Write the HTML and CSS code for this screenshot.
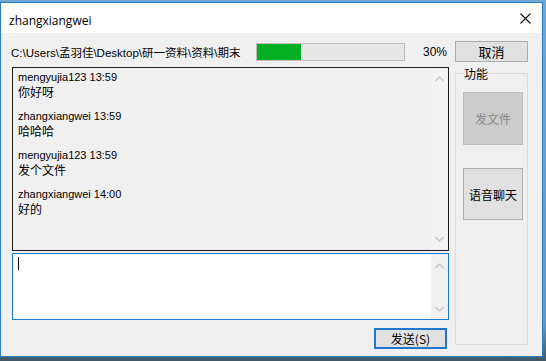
FILE: index.html
```html
<!DOCTYPE html>
<html lang="zh">
<head>
    <meta charset="UTF-8">
    <title>zhangxiangwei</title>
    <link rel="stylesheet" href="styles.css">
</head>
<body>
    <div class="window">
        <div class="titlebar">
            <span class="title">zhangxiangwei</span>
            <svg class="close" width="11" height="11" viewBox="0 0 11 11">
                <path d="M0.5 0.5 L10.5 10.5 M10.5 0.5 L0.5 10.5" stroke="#111" stroke-width="1.1" fill="none"/>
            </svg>
        </div>

        <div class="content">
            <div class="toprow">
                <span class="path">C:\Users\孟羽佳\Desktop\研一资料\资料\期末</span>
                <div class="progress"><div class="fill" style="width: 30%"></div></div>
                <span class="percent">30%</span>
                <button class="btn btn-cancel">取消</button>
            </div>

            <div class="main">
                <div class="chat">
                    <div class="history">
                        <div class="messages">
                            <div class="msg">
                                <div class="who">mengyujia123 13:59</div>
                                <div class="text">你好呀</div>
                            </div>
                            <div class="msg">
                                <div class="who">zhangxiangwei 13:59</div>
                                <div class="text">哈哈哈</div>
                            </div>
                            <div class="msg">
                                <div class="who">mengyujia123 13:59</div>
                                <div class="text">发个文件</div>
                            </div>
                            <div class="msg">
                                <div class="who">zhangxiangwei 14:00</div>
                                <div class="text">好的</div>
                            </div>
                        </div>
                        <div class="scroll">
                            <svg width="9" height="6" viewBox="0 0 9 6"><polyline points="0.5,5 4.5,1 8.5,5" class="arrow"/></svg>
                            <svg width="9" height="6" viewBox="0 0 9 6"><polyline points="0.5,1 4.5,5 8.5,1" class="arrow"/></svg>
                        </div>
                    </div>

                    <div class="input">
                        <div class="editor"><span class="caret"></span></div>
                        <div class="scroll scroll-input">
                            <svg width="9" height="6" viewBox="0 0 9 6"><polyline points="0.5,5 4.5,1 8.5,5" class="arrow"/></svg>
                            <svg width="9" height="6" viewBox="0 0 9 6"><polyline points="0.5,1 4.5,5 8.5,1" class="arrow"/></svg>
                        </div>
                    </div>

                    <div class="send-row">
                        <button class="btn btn-send">发送(S)</button>
                    </div>
                </div>

                <fieldset class="group">
                    <legend>功能</legend>
                    <button class="btn btn-side" disabled>发文件</button>
                    <button class="btn btn-side btn-voice">语音聊天</button>
                </fieldset>
            </div>
        </div>
    </div>
</body>
</html>
```

FILE: styles.css
```css
body {
    margin: 0;
    width: 546px;
    height: 361px;
    overflow: hidden;
    background: linear-gradient(180deg, #6ea8d6 0%, #5f98c6 90%, #3e5866 100%);
    font-family: "Noto Sans CJK SC", sans-serif;
    color: #000;
}
.window {
    width: 541px;
    height: 353px;
    margin-top: 2px;
    border: 1px solid #2b7cc4;
    background: #f0f0f0;
    display: flex;
    flex-direction: column;
}
.titlebar {
    height: 30px;
    background: #fff;
    display: flex;
    align-items: center;
    justify-content: space-between;
    padding: 0 11px 0 8px;
}
.title {
    font-family: "Open Sans", "Liberation Sans", sans-serif;
    font-size: 12px;
    padding-top: 4px;
}
.close {
    display: block;
}
.content {
    flex: 1;
    padding: 8px 14px 0 10px;
}
.toprow {
    display: flex;
    align-items: center;
    height: 21px;
}
.path {
    width: 245px;
    font-family: "Liberation Sans", "Noto Sans CJK SC", sans-serif;
    font-size: 11.5px;
    white-space: nowrap;
}
.progress {
    width: 147px;
    height: 16px;
    border: 1px solid #bcbcbc;
    background: #e6e6e6;
}
.fill {
    height: 100%;
    background: #06b025;
}
.percent {
    width: 42px;
    text-align: right;
    font-family: "Liberation Sans", sans-serif;
    font-size: 12px;
}
.btn {
    box-sizing: border-box;
    font-family: "Noto Sans CJK SC", sans-serif;
    background: #e1e1e1;
    border: 1px solid #adadad;
    color: #000;
    padding: 0;
    margin: 0;
}
.btn-cancel {
    width: 73px;
    height: 21px;
    margin-left: 8px;
    font-size: 13px;
}
.main {
    display: flex;
    margin-top: 5px;
}
.chat {
    width: 437px;
    margin-left: 1px;
}
.history {
    box-sizing: border-box;
    height: 184px;
    border: 1px solid #1c1c1c;
    display: flex;
}
.messages {
    flex: 1;
    padding: 3px 5px;
}
.msg {
    margin-bottom: 13px;
}
.who {
    font-family: "Liberation Sans", "Noto Sans CJK SC", sans-serif;
    font-size: 11px;
    line-height: 13px;
}
.text {
    font-size: 12px;
    line-height: 13px;
    padding-top: 1px;
    margin-bottom: -1px;
}
.scroll {
    width: 17px;
    display: flex;
    flex-direction: column;
    justify-content: space-between;
    align-items: center;
    padding: 8px 0;
    background: #f3f3f3;
}
.arrow {
    fill: none;
    stroke: #c4c4c4;
    stroke-width: 1.2;
}
.input {
    box-sizing: border-box;
    height: 67px;
    margin-top: 2px;
    border: 1px solid #1979ca;
    background: #fff;
    display: flex;
}
.editor {
    flex: 1;
    padding: 3px 5px;
}
.caret {
    display: block;
    width: 1px;
    height: 13px;
    background: #000;
}
.scroll-input {
    background: #f0f0f0;
    padding: 9px 0 7px;
}
.send-row {
    display: flex;
    justify-content: flex-end;
    padding-right: 2px;
    margin-top: 8px;
}
.btn-send {
    width: 73px;
    height: 21px;
    border: 2px solid #1f78d0;
    font-size: 12px;
}
.group {
    box-sizing: border-box;
    width: 73px;
    height: 278px;
    margin: 0 0 0 6px;
    padding: 0 0 0 7px;
    border: 1px solid #dcdcdc;
    min-width: 0;
}
.group legend {
    font-size: 12px;
    line-height: 13px;
    padding: 0 1px;
    margin-left: 0;
}
.btn-side {
    display: block;
    width: 60px;
    font-size: 12px;
}
.btn-side:disabled {
    height: 53px;
    margin-top: 12px;
    background: #cccccc;
    border-color: #bfbfbf;
    color: #8a8a8a;
}
.btn-voice {
    height: 52px;
    margin-top: 23px;
}
```
